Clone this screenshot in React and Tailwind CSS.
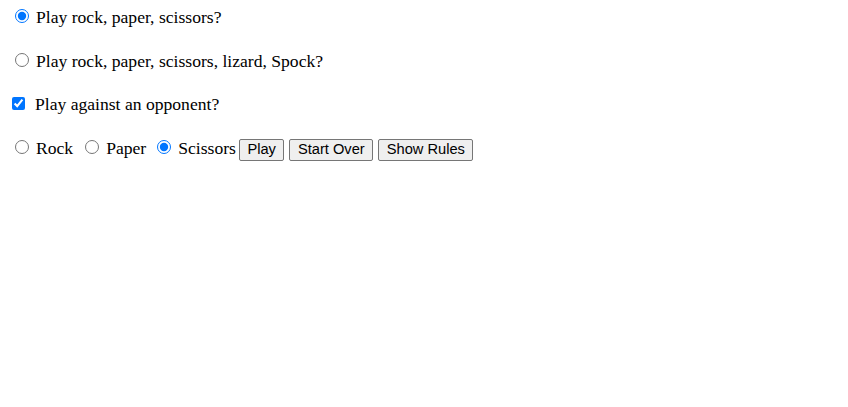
import { useState } from "react";

export default function App() {
    const [mode, setMode] = useState("rps");
    const [opponent, setOpponent] = useState(true);
    const [choice, setChoice] = useState("scissors");

    const btn = "font-['Liberation_Sans',Arial,sans-serif] text-[14.67px] leading-[17px] px-[7.5px] h-[22px] bg-[#efefef] border border-[#767676] rounded-[2px] text-black";
    const radio = "w-[14px] h-[14px] mt-[-2px] shrink-0";

    return (
        <div className="min-h-screen bg-white text-black font-['Liberation_Serif','Times_New_Roman',serif] text-[17.6px] leading-[20px] px-[8px] pt-[7px]">
            <div className="flex flex-col">
                {/* game type */}
                <div className="flex items-center h-[20px]">
                    <input
                        type="radio"
                        name="mode"
                        checked={mode === "rps"}
                        onChange={() => setMode("rps")}
                        className={`${radio} ml-[7px]`}
                    />
                    <span className="ml-[7px]">Play rock, paper, scissors?</span>
                </div>
                <div className="flex items-center h-[20px] mt-[24px]">
                    <input
                        type="radio"
                        name="mode"
                        checked={mode === "rpsls"}
                        onChange={() => setMode("rpsls")}
                        className={`${radio} ml-[7px]`}
                    />
                    <span className="ml-[7px]">Play rock, paper, scissors, lizard, Spock?</span>
                </div>
                <div className="flex items-center h-[20px] mt-[23px]">
                    <input
                        type="checkbox"
                        checked={opponent}
                        onChange={() => setOpponent(!opponent)}
                        className="w-[13px] h-[13px] mt-[-2px] ml-[4px] shrink-0"
                    />
                    <span className="ml-[10px]">Play against an opponent?</span>
                </div>

                {/* moves + actions */}
                <div className="flex items-center h-[20px] mt-[24px]">
                    <input
                        type="radio"
                        name="move"
                        checked={choice === "rock"}
                        onChange={() => setChoice("rock")}
                        className={`${radio} ml-[7px]`}
                    />
                    <span className="ml-[7px]">Rock</span>
                    <input
                        type="radio"
                        name="move"
                        checked={choice === "paper"}
                        onChange={() => setChoice("paper")}
                        className={`${radio} ml-[12px]`}
                    />
                    <span className="ml-[7px]">Paper</span>
                    <input
                        type="radio"
                        name="move"
                        checked={choice === "scissors"}
                        onChange={() => setChoice("scissors")}
                        className={`${radio} ml-[11px]`}
                    />
                    <span className="ml-[7px]">Scissors</span>
                    <div className="flex items-center gap-[5px] ml-[3px] mt-[3px]">
                        <button className={btn}>Play</button>
                        <button className={btn}>Start Over</button>
                        <button className={btn}>Show Rules</button>
                    </div>
                </div>
            </div>
        </div>
    );
}
